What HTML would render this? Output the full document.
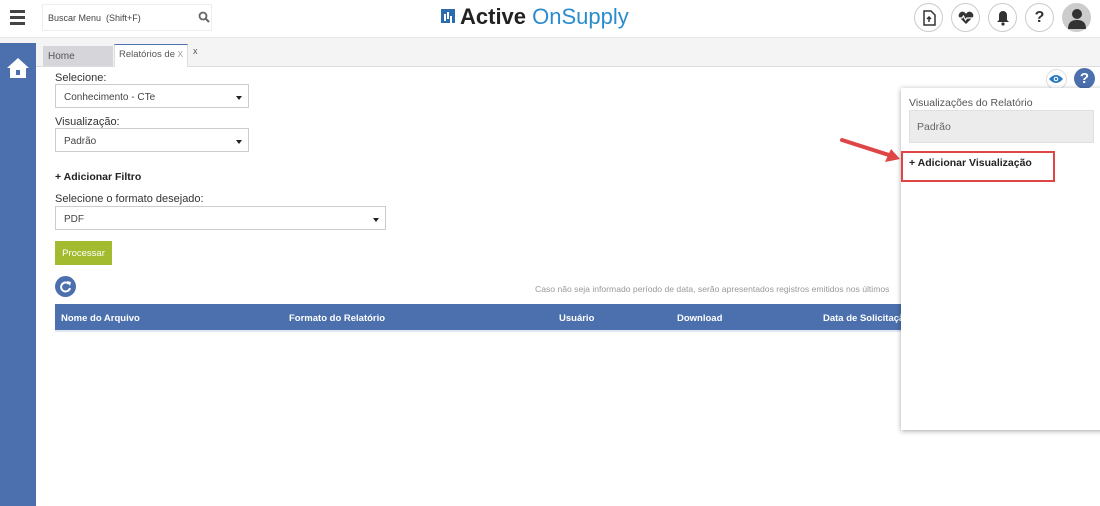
<!DOCTYPE html><html><head><style>
body{margin:0;width:1100px;height:506px;overflow:hidden;font-family:"Liberation Sans",sans-serif;background:#fff;position:relative;font-size:11px;color:#333}
.a{position:absolute}
.sel{position:absolute;background:#fff;border:1px solid #ccc;font-size:10px;color:#444;box-sizing:border-box;padding-left:8px}
.sel:after{content:"";position:absolute;right:6px;top:11px;border:3px solid transparent;border-top:4px solid #222}
.ic{position:absolute;top:3px;width:29px;height:29px;border-radius:50%;border:1px solid #ccc;box-sizing:border-box;background:#fff;display:flex;align-items:center;justify-content:center}
</style></head><body>
<div class="a" style="left:0;top:0;width:1100px;height:37px;background:#fff;border-bottom:1px solid #e8e8e8"></div>
<div class="a" style="left:10px;top:10px;width:15px;height:3px;background:#444;box-shadow:0 6px 0 #444,0 12px 0 #444"></div>
<div class="a" style="left:42px;top:4px;width:170px;height:27px;border:1px solid #eee;box-sizing:border-box;font-size:9px;color:#444;padding:8px 0 0 5px">Buscar Menu &nbsp;(Shift+F)</div>
<svg class="a" style="left:198px;top:11px" width="12" height="12"><circle cx="5" cy="5" r="3.5" stroke="#666" stroke-width="1.8" fill="none"/><path d="M7.5 7.5L11 11" stroke="#666" stroke-width="2"/></svg>
<div class="a" style="left:441px;top:9px;width:14px;height:14px;background:#2b6cb0"></div>
<div class="a" style="left:444px;top:14px;width:2px;height:7px;background:#fff;box-shadow:3px -2px 0 #fff,6px 2px 0 #fff"></div>
<div class="a" style="left:460px;top:4px;font-size:22px;font-weight:bold;color:#222">Active <span style="font-weight:normal;color:#2b8ccd">OnSupply</span></div>
<div class="ic" style="left:914px"><svg width="14" height="16"><path d="M2 1h7l4 4v10H2z" fill="none" stroke="#333" stroke-width="1.5"/><path d="M7 12V7M5 9l2-2 2 2" stroke="#333" stroke-width="1.5" fill="none"/></svg></div>
<div class="ic" style="left:951px"><svg width="18" height="14"><path d="M9 13L2 6a3.5 3.5 0 0 1 7-3 3.5 3.5 0 0 1 7 3z" fill="#333"/><path d="M1 7h4l1.5-2 2 4 1.5-2h6" stroke="#fff" stroke-width="1.2" fill="none"/></svg></div>
<div class="ic" style="left:988px"><svg width="14" height="16"><path d="M7 1a4 4 0 0 1 4 4v5l2 2H1l2-2V5a4 4 0 0 1 4-4z" fill="#333"/><circle cx="7" cy="14" r="1.6" fill="#333"/></svg></div>
<div class="ic" style="left:1025px;font-weight:bold;font-size:16px;color:#333">?</div>
<div class="ic" style="left:1062px;background:#ccc"><svg width="20" height="22"><circle cx="10" cy="7" r="5" fill="#333"/><path d="M1 22c0-7 4-9 9-9s9 2 9 9z" fill="#333"/></svg></div>
<div class="a" style="left:0;top:38px;width:1100px;height:28px;background:#f4f4f4;border-bottom:1px solid #ddd"></div>
<div class="a" style="left:0;top:43px;width:36px;height:463px;background:#4b70ad"></div>
<svg class="a" style="left:6px;top:57px" width="24" height="22"><path d="M12 1L1 11h3v10h16V11h3z" fill="#fff"/><rect x="10" y="13" width="4" height="5" fill="#4b70ad"/></svg>
<div class="a" style="left:43px;top:46px;width:70px;height:20px;background:#d6d6da;font-size:10px;color:#555;padding:5px 0 0 5px;box-sizing:border-box">Home</div>
<div class="a" style="left:114px;top:44px;width:74px;height:23px;background:#fff;border-top:1px solid #4b70ad;border-left:1px solid #ddd;border-right:1px solid #ddd;font-size:9.5px;color:#555;padding:4px 0 0 4px;box-sizing:border-box;white-space:nowrap;overflow:hidden">Relatórios de <span style="color:#999;font-size:8px">X</span></div>
<div class="a" style="left:193px;top:46px;font-size:9px;color:#555">x</div>
<div class="a" style="left:55px;top:72px">Selecione:</div>
<div class="sel" style="left:55px;top:84px;width:194px;height:24px;padding-top:7px">Conhecimento - CTe</div>
<div class="a" style="left:55px;top:116px">Visualização:</div>
<div class="sel" style="left:55px;top:128px;width:194px;height:24px;padding-top:7px">Padrão</div>
<div class="a" style="left:55px;top:171px;font-weight:bold;font-size:10.5px;color:#222">+ Adicionar Filtro</div>
<div class="a" style="left:55px;top:193px">Selecione o formato desejado:</div>
<div class="sel" style="left:55px;top:206px;width:331px;height:24px;padding-top:7px">PDF</div>
<div class="a" style="left:55px;top:241px;width:57px;height:24px;background:#a3bb2f;color:#fff;font-size:9.5px;text-align:center;box-sizing:border-box;padding-top:7px">Processar</div>
<div class="a" style="left:55px;top:276px;width:21px;height:21px;border-radius:50%;background:#4b70ad"></div>
<svg class="a" style="left:59px;top:280px" width="13" height="13"><path d="M10 4A4.5 4.5 0 1 0 11 8" stroke="#fff" stroke-width="2" fill="none"/><path d="M8 1l4 1-1 4z" fill="#fff"/></svg>
<div class="a" style="left:535px;top:284px;font-size:8.6px;color:#999;white-space:nowrap">Caso não seja informado período de data, serão apresentados registros emitidos nos últimos</div>
<div class="a" style="left:55px;top:304px;width:850px;height:26px;background:#4b70ad;border-bottom:2px solid #dfe6f0"></div>
<div class="a" style="top:313px;left:61px;font-weight:bold;color:#fff;font-size:9.5px">Nome do Arquivo</div>
<div class="a" style="top:313px;left:289px;font-weight:bold;color:#fff;font-size:9.5px">Formato do Relatório</div>
<div class="a" style="top:313px;left:559px;font-weight:bold;color:#fff;font-size:9.5px">Usuário</div>
<div class="a" style="top:313px;left:677px;font-weight:bold;color:#fff;font-size:9.5px">Download</div>
<div class="a" style="top:313px;left:823px;font-weight:bold;color:#fff;font-size:9.5px;white-space:nowrap">Data de Solicitação</div>
<div class="a" style="left:1046px;top:69px;width:19px;height:19px;border-radius:50%;border:1px solid #ddd;background:#fff"></div>
<svg class="a" style="left:1048px;top:74px" width="16" height="10"><path d="M1 5Q8-3 15 5Q8 13 1 5z" fill="#2b7bc0"/><circle cx="8" cy="5" r="2.3" fill="#fff"/><circle cx="8" cy="5" r="1.2" fill="#2b7bc0"/></svg>
<div class="a" style="left:1074px;top:68px;width:21px;height:21px;border-radius:50%;background:#4b70ad;color:#fff;font-weight:bold;font-size:15px;text-align:center;line-height:21px">?</div>
<div class="a" style="left:901px;top:88px;width:205px;height:342px;background:#fff;box-shadow:0 1px 5px rgba(0,0,0,.35)"></div>
<div class="a" style="left:909px;top:97px;font-size:10.5px;color:#555">Visualizações do Relatório</div>
<div class="a" style="left:909px;top:110px;width:185px;height:33px;background:#ececec;border:1px solid #e0e0e0;box-sizing:border-box;font-size:10.5px;color:#666;padding:10px 0 0 7px">Padrão</div>
<div class="a" style="left:901px;top:151px;width:154px;height:31px;border:2px solid #e04545;box-sizing:border-box"></div>
<div class="a" style="left:909px;top:157px;font-weight:bold;font-size:10.5px;color:#222">+ Adicionar Visualização</div>
<svg class="a" style="left:838px;top:135px" width="70" height="32"><path d="M4 5L54 21" stroke="#e04545" stroke-width="4" stroke-linecap="round"/><path d="M62 24L47 27L53 14z" fill="#e04545"/></svg>
</body></html>
